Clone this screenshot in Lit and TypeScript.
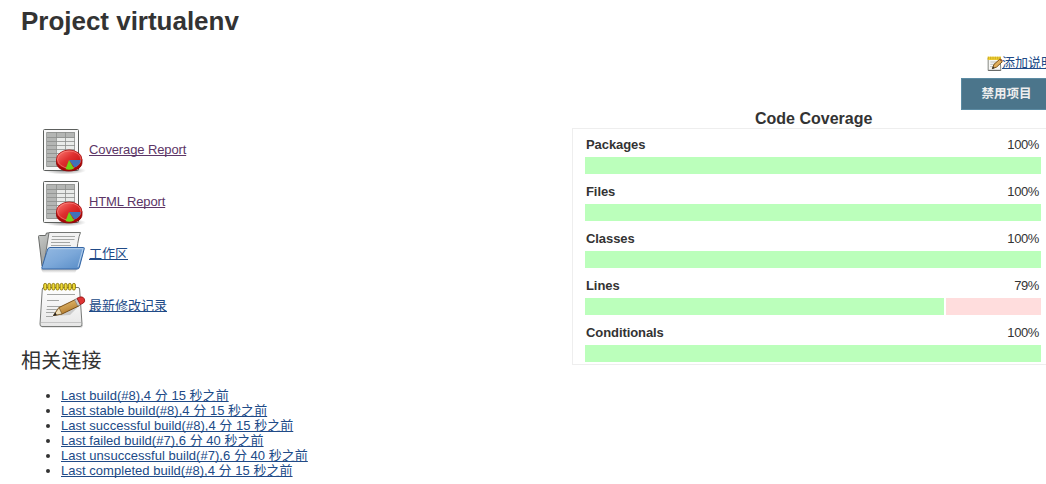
import { LitElement, html, css, svg } from "lit";
import { customElement, property } from "lit/decorators.js";

const chartIcon = svg`
  <defs>
    <linearGradient id="pie" x1="0" y1="0" x2="1" y2="1"><stop offset="0" stop-color="#ff8078"/><stop offset=".45" stop-color="#df3030"/><stop offset="1" stop-color="#bd0808"/></linearGradient>
    <radialGradient id="sh"><stop offset="0" stop-color="#000" stop-opacity=".45"/><stop offset="1" stop-color="#000" stop-opacity="0"/></radialGradient>
  </defs>
  <ellipse cx="27" cy="44.500" rx="21" ry="4" fill="url(#sh)"/>
  <rect x="5.5" y="3.500" width="35" height="41" rx="1" fill="#f8f8f8" stroke="#5c5f5d"/>
  <rect x="9" y="6" width="28" height="35" fill="#e9ebe9"/>
  <path d="M9 6h28v6H9zM9 6h9v35H9z" fill="#b4b6b4"/>
  <path d="M8.500 6.500h28v34h-28zM18.500 6v35M27.500 6v35M9 11.500h28M9 15.500h28M9 19.500h28M9 23.500h28M9 27.500h28M9 31.500h28M9 35.500h28" fill="none" stroke="#8c8e8c" stroke-width=".8"/>
  <path d="M18.500 33.500v3c0 5 5.500 8.500 12.700 8.500s12.800-3.500 12.800-8.500v-3z" fill="#a90808" stroke="#8c0000" stroke-width=".8"/>
  <ellipse cx="31.200" cy="33.500" rx="12.700" ry="9.500" fill="url(#pie)" stroke="#a80909" stroke-width=".8"/>
  <ellipse cx="31.200" cy="33.500" rx="11.700" ry="8.500" fill="none" stroke="#ff9a90" stroke-opacity=".65" stroke-width=".8"/>
  <path d="M31 34h11.500c0 4-2.500 6-6 7.500z" fill="#3f72b9"/>
  <path d="M31 34l5 8.500c-3 1.500-6 1.500-8.500.6z" fill="#73d216"/>`;

const folderIcon = svg`
  <defs>
    <linearGradient id="fd" x1="0" y1="0" x2="1" y2="1"><stop offset="0" stop-color="#94b9e2"/><stop offset=".5" stop-color="#7ca8d9"/><stop offset="1" stop-color="#568bc6"/></linearGradient>
    <linearGradient id="bk" x1="0" y1="0" x2="1" y2="1"><stop offset="0" stop-color="#c8cac8"/><stop offset="1" stop-color="#777977"/></linearGradient>
    <linearGradient id="fs" x1="0" y1="0" x2="0" y2="1"><stop offset="0" stop-color="#777" stop-opacity=".5"/><stop offset="1" stop-color="#777" stop-opacity="0"/></linearGradient>
  </defs>
  <path d="M3 39h36l-2 4H5z" fill="url(#fs)"/>
  <path d="M.5 6.500q0-1 1-1h6l1-2.500h8l2 5h20v28H4z" fill="url(#bk)" stroke="#686a68"/>
  <path d="M11 2.500h31.500q-3 6-5 31.500H6z" fill="#f2f2f2" stroke="#737573"/>
  <path d="M14 6.500h23M13.500 9.500h23M13 12.500h19M13 15.500h20" stroke="#a4a6a4"/>
  <path d="M11.500 17.500h34q1 0 .8 1l-5 19q-.4 1.500-2 1.500H5q-1.500 0-1.200-1.300l4.700-15q1-5.200 3-5.200z" fill="url(#fd)" stroke="#3465a4"/>
  <path d="M12 18.700h33l-5 18.100" fill="none" stroke="#bad3ed" stroke-width=".9"/>`;

const notepadIcon = svg`
  <defs>
    <linearGradient id="np" x1="0" y1="0" x2="0" y2="1"><stop offset="0" stop-color="#fff"/><stop offset="1" stop-color="#e6e6e6"/></linearGradient>
    <linearGradient id="wd" x1="0" y1="0" x2=".5" y2="1"><stop offset="0" stop-color="#f2cf80"/><stop offset="1" stop-color="#b0762a"/></linearGradient>
  </defs>
  <path d="M2 43h43l-1 2.500H4z" fill="#888" opacity=".4"/>
  <path d="M6 5.500h34q1.500 0 1.600 1.500L44 42q.2 2.500-2 2.500H4q-2.200 0-2-2.500L4.300 7q.1-1.500 1.700-1.500z" fill="url(#np)" stroke="#777977"/>
  <path d="M3 40.500h40" stroke="#bbb" stroke-width=".8"/>
  <path d="M9 12.500h28M9 18.500h12M9 24.500h20M8.500 27.500h16M8 30.500h12M8 34.500h7" stroke="#a4a6a4"/>
  ${[5.7, 9.8, 13.9, 18, 22.1, 26.2, 30.3, 34.4].map(
    (x) => svg`<rect x=${x} y="1.400" width="3" height="6.600" rx="1.500" fill="#f0dc3a" stroke="#8a7400" stroke-width=".9"/>`
  )}
  <path d="M15 34l17-1 10-10-18 5z" fill="#777" opacity=".3"/>
  <path d="M15.500 33.500l5.500-8 17-8.300 3.300 6.500L24 32z" fill="url(#wd)" stroke="#70450c" stroke-width=".9"/>
  <path d="M15.500 33.500l5.500-8 3 6.500z" fill="#efdeb9" stroke="#765624" stroke-width=".7"/>
  <path d="M15 34l2.300-3.600 1.500 2.600z" fill="#222"/>
  <path d="M36.500 17.800l3-1.500 3.200 6.200-2.900 1.500z" fill="#c7c9c7" stroke="#777" stroke-width=".6"/>
  <path d="M39 16.300l3-1.300q3-.8 4.300 1.800t-1 4.300l-3 1.500z" fill="#df3535" stroke="#8e1010" stroke-width=".8"/>`;

const editIcon = svg`
  <path d="M3.500 6h36l2 37.500h-38z" fill="#f7f7f5" stroke="#858782" stroke-width="3"/>
  <path d="M4 43h37" stroke="#656765" stroke-width="3"/>
  <path d="M10 18h20M10 25h14M9 32h9" stroke="#bdbfbd" stroke-width="3"/>
  <path d="M2 2h40v10H2z" fill="#f0ce30"/>
  <path d="M4 2v8M11 2v8M18 2v8M25 2v8M32 2v8M39 2v8" stroke="#b89b1c" stroke-width="2"/>
  <path d="M16 38l5-13 17-15 8 7-17 16z" fill="#e0ae5d" stroke="#7a5218" stroke-width="3"/>
  <path d="M15 39l3-8 5 5z" fill="#333"/>
  <path d="M38 10l3-2.500 6.500 6-3 3z" fill="#9a5a30"/>`;

const icons: Record<string, unknown> = { chart: chartIcon, folder: folderIcon, notepad: notepadIcon, edit: editIcon };

@customElement("ui-icon")
class UiIcon extends LitElement {
  @property() name = "";
  @property({ type: Number }) size = 48;
  static styles = css`
    :host { display: block; flex: none; }
    svg { display: block; }
  `;
  render() {
    return html`<svg width=${this.size} height=${this.size} viewBox="0 0 48 48">${icons[this.name]}</svg>`;
  }
}

@customElement("app-root")
class AppRoot extends LitElement {
  static styles = css`
    :host {
      display: block; width: 1046px; height: 484px; overflow: hidden; background: #fff; color: #333;
      font: 13px/15px "Liberation Sans", "Noto Sans CJK SC", sans-serif;
    }
    h1 { margin: 0; padding: 6px 0 0 21px; height: 46px; font-size: 26px; line-height: 30px; letter-spacing: -.02px; }
    .page { display: grid; grid-template-columns: 572px 474px; }
    .left { padding-top: 72px; }
    .task { display: flex; align-items: center; gap: 3px; height: 52px; padding-left: 38px; }
    .task a { padding-bottom: 2px; }
    a { color: #204a87; text-decoration: underline; text-underline-offset: 1px; text-decoration-thickness: 1px; text-decoration-skip-ink: none; cursor: pointer; white-space: nowrap; }
    a.visited { color: #5c3566; letter-spacing: -.12px; }
    h2 { margin: 14px 0 0 21px; height: 42px; font-size: 20px; line-height: 30px; font-weight: 400; letter-spacing: .2px; }
    ul { margin: 0; padding: 0 0 0 61px; }
    li { height: 15px; line-height: 15px; letter-spacing: .03px; }
    .actions { display: flex; flex-direction: column; padding-left: 389px; height: 58px; }
    .edit { display: flex; align-items: center; padding: 0 0 0 26px; height: 24px; }
    .edit a { margin: -3px 0 0 -1px; }
    button {
      width: 101px; height: 32px; padding: 0 10px 0 0; flex: none; border: 1px solid #5c8ba3; background: #4b758b; color: #eee;
      font: bold 12.500px/30px "Liberation Sans", "Noto Sans CJK SC", sans-serif; text-align: center;
    }
    .edit, button { margin-top: 0; }
    .actions { padding-top: 0; }
    .heading { padding-left: 183px; height: 18px; line-height: 18px; font-size: 16px; font-weight: bold; white-space: nowrap; }
    .coverage { box-sizing: border-box; width: 482px; height: 237px; border: 1px solid #eee; padding: 8px 0 0 12px; }
    .metric { width: 456px; height: 47px; }
    .label { display: flex; justify-content: space-between; height: 20px; padding: 0 2px 0 1px; }
    .label b { letter-spacing: -.08px; }
    .label span { letter-spacing: -.4px; }
    .bar { display: flex; gap: 2px; height: 17px; }
    .ok { background: #bfb; }
    .miss { background: #fdd; flex: 1; }
    .edit { box-sizing: content-box; padding-bottom: 2px; }
  `;

  private tasks = [
    { icon: "chart", text: "Coverage Report", visited: true },
    { icon: "chart", text: "HTML Report", visited: true },
    { icon: "folder", text: "工作区", visited: false },
    { icon: "notepad", text: "最新修改记录", visited: false },
  ];
  private builds = [
    "Last build(#8),4 分 15 秒之前",
    "Last stable build(#8),4 分 15 秒之前",
    "Last successful build(#8),4 分 15 秒之前",
    "Last failed build(#7),6 分 40 秒之前",
    "Last unsuccessful build(#7),6 分 40 秒之前",
    "Last completed build(#8),4 分 15 秒之前",
  ];
  private metrics: [string, number][] = [
    ["Packages", 100], ["Files", 100], ["Classes", 100], ["Lines", 79], ["Conditionals", 100],
  ];

  render() {
    return html`
      <h1>Project virtualenv</h1>
      <div class="page">
        <main class="left">
          ${this.tasks.map((t) => html`<div class="task">
            <ui-icon name=${t.icon}></ui-icon><a class=${t.visited ? "visited" : ""}>${t.text}</a>
          </div>`)}
          <h2>相关连接</h2>
          <ul>${this.builds.map((b) => html`<li><a>${b}</a></li>`)}</ul>
        </main>
        <aside>
          <div class="actions">
            <div class="edit"><ui-icon name="edit" size="16"></ui-icon><a>添加说明</a></div>
            <button>禁用项目</button>
          </div>
          <div class="heading">Code Coverage</div>
          <div class="coverage">
            ${this.metrics.map(([name, value]) => html`<div class="metric">
              <div class="label"><b>${name}</b><span>${value}%</span></div>
              <div class="bar">
                <div class="ok" style="width:${value === 100 ? "100%" : `calc(${value}% - 1px)`}"></div>
                ${value < 100 ? html`<div class="miss"></div>` : ""}
              </div>
            </div>`)}
          </div>
        </aside>
      </div>
    `;
  }
}
